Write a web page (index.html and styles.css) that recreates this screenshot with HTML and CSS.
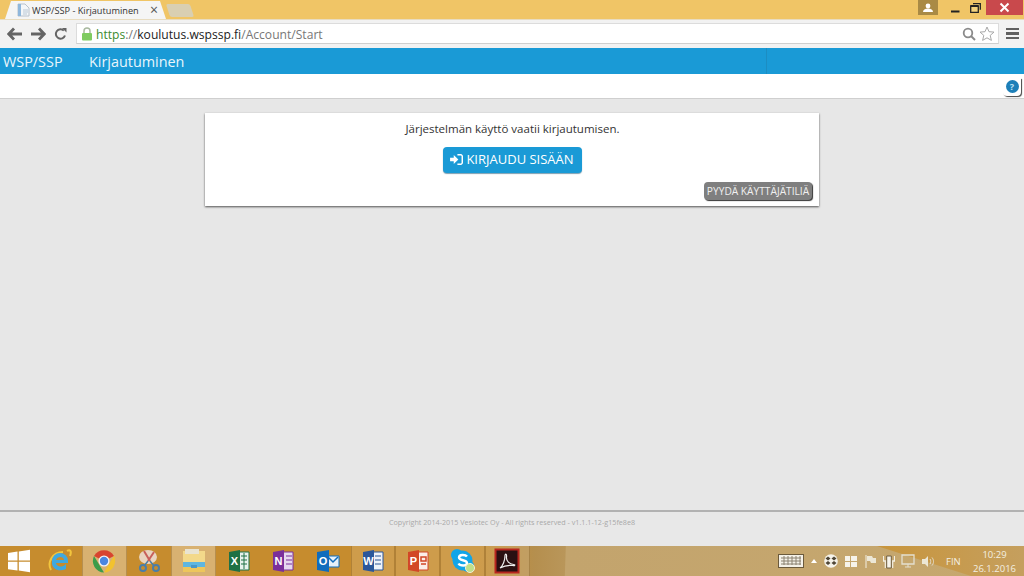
FILE: index.html
```html
<!DOCTYPE html>
<html lang="fi">
<head>
<meta charset="utf-8">
<title>WSP/SSP - Kirjautuminen</title>
<link rel="stylesheet" href="styles.css">
</head>
<body>
<div class="screen">
  <header class="titlebar">
    <div class="tab">
      <svg class="favicon" width="13" height="14" viewBox="0 0 13 14"><path d="M1 1h7l4 4v8H1z" fill="#f4f6f8" stroke="#b9c2cc"/><path d="M1 1h3v12H1z" fill="#8fb7dc"/><path d="M6 7h5M6 9h5M6 11h4" stroke="#b9c8d6"/></svg>
      <span class="tab-title">WSP/SSP - Kirjautuminen</span>
      <span class="tab-close">×</span>
    </div>
    <div class="tab-new"></div>
    <div class="window-controls">
      <div class="user-btn"><svg width="12" height="10" viewBox="0 0 12 10"><circle cx="6" cy="3" r="2.400" fill="#fff"/><path d="M1 9c0-2 2-3.500 5-3.500s5 1.500 5 3.500z" fill="#fff"/></svg></div>
      <div class="win-btn"><svg width="10" height="10" viewBox="0 0 10 10"><path d="M1 8.500h8.500" stroke="#222" stroke-width="2"/></svg></div>
      <div class="win-btn"><svg width="11" height="10" viewBox="0 0 11 10"><path d="M3 .7h7.300v6M.7 3h7.600v6.300H.7z" fill="#f3d27c" stroke="#222" stroke-width="1.300"/><path d="M.7 3h7.600" stroke="#222" stroke-width="2"/></svg></div>
      <div class="close-btn"><svg width="11" height="11" viewBox="0 0 11 11"><path d="M1.500 1.500l8 8M9.500 1.500l-8 8" stroke="#fff" stroke-width="2"/></svg></div>
    </div>
  </header>

  <div class="toolbar">
    <svg class="tool-icon" width="16" height="14" viewBox="0 0 16 14"><path d="M7 1.500L1.800 7 7 12.500M2.500 7h12.500" fill="none" stroke="#646464" stroke-width="2.800"/></svg>
    <svg class="tool-icon" width="16" height="14" viewBox="0 0 16 14"><path d="M9 1.500L14.200 7 9 12.500M13.500 7H1" fill="none" stroke="#646464" stroke-width="2.800"/></svg>
    <svg class="tool-icon reload" width="13" height="14" viewBox="0 0 13 14"><path d="M11 8.500A4.700 4.700 0 1 1 9.800 3.600" fill="none" stroke="#646464" stroke-width="2"/><path d="M8 1h4.500v4.500z" fill="#646464"/></svg>
    <div class="omnibox">
      <svg class="lock" width="12" height="14" viewBox="0 0 12 14"><path d="M3 6V4a3 3 0 0 1 6 0v2" fill="none" stroke="#a9b9a0" stroke-width="1.500"/><rect x="1" y="6" width="10" height="7.500" rx="1" fill="#7fcb60"/></svg>
      <span class="url"><span class="url-scheme">https</span><span class="url-path">://</span><span class="url-host">koulutus.wspssp.fi</span><span class="url-path">/Account/Start</span></span>
      <svg class="search" width="14" height="14" viewBox="0 0 14 14"><circle cx="6" cy="6" r="4.300" fill="none" stroke="#8a8a8a" stroke-width="1.800"/><path d="M9 9l4 4" stroke="#8a8a8a" stroke-width="2"/></svg>
      <svg class="star" width="16" height="15" viewBox="0 0 16 15"><path d="M8 1l2 4.700 5 .4-3.800 3.300 1.200 5L8 11.800 3.600 14.400l1.200-5L1 6.100l5-.4z" fill="#fff" stroke="#a8a8a8"/></svg>
    </div>
    <div class="menu-btn"><span></span><span></span><span></span></div>
  </div>

  <nav class="appbar">
    <span class="brand">WSP/SSP</span>
    <span class="page-name">Kirjautuminen</span>
    <span class="appbar-divider"></span>
  </nav>

  <div class="subbar">
    <div class="help-btn"><span class="help-dot">?</span></div>
  </div>

  <main class="content">
    <section class="card">
      <p class="card-text">Järjestelmän käyttö vaatii kirjautumisen.</p>
      <a class="login-btn">
        <svg width="13" height="11" viewBox="0 0 14 12"><path d="M0 4h4V1l5 5-5 5V8H0z" fill="#fff"/><path d="M8 .8h3.500A2 2 0 0 1 13.300 3v6a2 2 0 0 1-1.800 2.200H8" fill="none" stroke="#fff" stroke-width="1.600"/></svg>
        KIRJAUDU SISÄÄN
      </a>
      <div class="card-foot"><a class="request-btn">PYYDÄ KÄYTTÄJÄTILIÄ</a></div>
    </section>
  </main>

  <footer class="page-footer">Copyright 2014-2015 Vesiotec Oy - All rights reserved - v1.1.1-12-g15fe8e8</footer>

  <div class="taskbar">
    <div class="task-start">
      <svg width="24" height="24" viewBox="0 0 24 24"><path d="M1 4l9.500-1.400V11.500H1zM11.800 2.400L23 .8v10.700H11.800zM1 12.800h9.500v8.800L1 20.200zM11.800 12.800H23v10.400l-11.200-1.600z" fill="#fff"/></svg>
    </div>
    <div class="task-item">
      <svg width="28" height="28" viewBox="0 0 28 28"><path d="M6 23C2 16 7 5 18 5" fill="none" stroke="#f2c53d" stroke-width="2"/><path d="M22 4c3-2 5 0 3 5" fill="none" stroke="#f2c53d" stroke-width="2"/><path d="M7 14a8 8 0 0 1 16 0v2H11c.5 4 6 5 10 1v5c-6 3-15 1-14-8zm4-1h8c0-4-7-4-8 0z" fill="#3fa9e0"/></svg>
    </div>
    <div class="task-item is-open is-bright">
      <svg width="26" height="26" viewBox="0 0 26 26"><path d="M13 13L3 8a11.500 11.500 0 0 1 20 0z" fill="#d8432f"/><path d="M13 24.500A11.500 11.500 0 0 1 3 8l6 10z" fill="#3c9c4a"/><path d="M23 8a11.500 11.500 0 0 1-10 16.500L18 16z" fill="#f2c22e"/><circle cx="13" cy="13" r="5.500" fill="#f4f4f4"/><circle cx="13" cy="13" r="4.200" fill="#4a86e0"/></svg>
    </div>
    <div class="task-item">
      <svg width="26" height="26" viewBox="0 0 26 26"><ellipse cx="12" cy="9" rx="9" ry="7" fill="#e9d5c0"/><path d="M8 3l6 10" stroke="#c8605a" stroke-width="2"/><path d="M18 4l-6 9" stroke="#c8605a" stroke-width="2"/><path d="M14 13l4 5M12 13l-4 5" stroke="#4a7ea8" stroke-width="1.500"/><circle cx="7" cy="20" r="3" fill="none" stroke="#4a7ea8" stroke-width="2"/><circle cx="20" cy="20" r="3" fill="none" stroke="#4a7ea8" stroke-width="2"/></svg>
    </div>
    <div class="task-item is-open is-bright">
      <svg width="26" height="26" viewBox="0 0 26 26"><path d="M2 3h22v21H2z" fill="#f3d98a"/><path d="M4 1h14v5H4z" fill="#e9e4d2"/><path d="M2 14h22v5H2z" fill="#5fb6e0"/><path d="M2 19h22v5H2z" fill="#edc65c"/><path d="M10 17h6v3h-6z" fill="#4a97c8"/></svg>
    </div>
    <div class="task-item">
      <svg width="24" height="24" viewBox="0 0 24 24"><path d="M12 3h10v18H12z" fill="#e8f2ec" stroke="#1e7145"/><path d="M14 7h6M14 11h6M14 15h6M17 4v16" stroke="#1e7145"/><path d="M2 3l11-2v22L2 21z" fill="#1e7145"/><text class="office-letter" x="7.500" y="16" text-anchor="middle">X</text></svg>
    </div>
    <div class="task-item">
      <svg width="24" height="24" viewBox="0 0 24 24"><path d="M12 3h10v18H12z" fill="#e6d8ef" stroke="#7b2f9b"/><path d="M15 7h6M15 11h6M15 15h6" stroke="#7b2f9b"/><path d="M2 3l11-2v22L2 21z" fill="#7b2f9b"/><text class="office-letter" x="7.500" y="16" text-anchor="middle">N</text></svg>
    </div>
    <div class="task-item">
      <svg width="24" height="24" viewBox="0 0 24 24"><path d="M11 7h12v11H11z" fill="#e7f1fa" stroke="#0f6cbd"/><path d="M12 8l5 5 5-5" fill="none" stroke="#0f6cbd" stroke-width="1.500"/><path d="M1 3l12-2v22L1 21z" fill="#0f6cbd"/><text class="office-letter" x="7" y="16" text-anchor="middle">O</text></svg>
    </div>
    <div class="task-item is-open">
      <svg width="24" height="24" viewBox="0 0 24 24"><path d="M12 3h10v18H12z" fill="#eef2f9" stroke="#2b579a"/><path d="M14 7h6M14 11h6M14 15h6" stroke="#2b579a"/><path d="M2 3l11-2v22L2 21z" fill="#2b579a"/><text class="office-letter" x="7.500" y="16" text-anchor="middle">W</text></svg>
    </div>
    <div class="task-item is-open">
      <svg width="24" height="24" viewBox="0 0 24 24"><path d="M12 3h10v18H12z" fill="#fbeee8" stroke="#d24726"/><path d="M15 8h5v4h-5zM15 15h5" fill="none" stroke="#d24726" stroke-width="1.500"/><path d="M2 3l11-2v22L2 21z" fill="#d24726"/><text class="office-letter" x="7.500" y="16" text-anchor="middle">P</text></svg>
    </div>
    <div class="task-item is-open">
      <svg width="26" height="26" viewBox="0 0 26 26"><circle cx="7" cy="7" r="6" fill="#12a5e8"/><circle cx="18" cy="18" r="6" fill="#12a5e8"/><circle cx="12.500" cy="12.500" r="10" fill="#12a5e8"/><path d="M17 8.500c-1.500-2-8-2.500-8 1 0 3.500 8 2 8 5.500 0 3.500-7 3-8.500 .5" fill="none" stroke="#fff" stroke-width="2.400"/><circle cx="20" cy="20" r="4.500" fill="#bfe08a" stroke="#f1f1d8"/></svg>
    </div>
    <div class="task-item is-open">
      <svg width="26" height="26" viewBox="0 0 26 26"><path d="M1.500 1.500h23v23h-23z" fill="#2a1012" stroke="#b8261f" stroke-width="2"/><path d="M6 20c3-2 5-8 5-12 0-3 2-2 1.500 1-.5 4 3 7 7 7.500 2 .3 1.500 1.500-1 1-4-.5-8 0-12.500 2.500z" fill="none" stroke="#eee" stroke-width="1.200"/></svg>
    </div>
    <div class="tray">
      <svg class="tray-keyboard" width="26" height="14" viewBox="0 0 26 14"><rect x=".5" y=".5" width="25" height="13" fill="#f4f1e8" stroke="#6b5a3c"/><path d="M3 4h20M3 7h20M3 10h20M6 2v9M10 2v9M14 2v9M18 2v9M22 2v9" stroke="#8a8170"/></svg>
      <svg width="8" height="6" viewBox="0 0 8 6"><path d="M4 1l3 4H1z" fill="#fff"/></svg>
      <svg width="14" height="14" viewBox="0 0 14 14"><circle cx="7" cy="7" r="6.800" fill="#f6f3ea"/><path d="M4 2.500l2.500 2L4 6.500l-2.500-2zM10 2.500l2.500 2-2.500 2-2.500-2zM4 7l2.500 2L4 11 1.500 9zM10 7l2.500 2-2.500 2-2.500-2z" fill="#4f4636"/></svg>
      <svg width="14" height="13" viewBox="0 0 14 13"><path d="M1 1h5v5H1zM7 1h6v5H7zM1 7h5v5H1zM7 7h6v5H7z" fill="#f6f3ea"/></svg>
      <svg width="13" height="13" viewBox="0 0 13 13"><path d="M2 0v13" stroke="#f3efe2"/><path d="M3 1h5l1 2h3v5H7L6 6H3z" fill="#ece7d6"/></svg>
      <svg width="12" height="15" viewBox="1 0 13 15" preserveAspectRatio="none"><path d="M5 2h5v12H5z" fill="#f6f3ea" stroke="#6b5a3c"/><path d="M1.500 2v5h2v7M13.500 2v5h-2v7" fill="none" stroke="#f3efe2" stroke-width="1.300"/></svg>
      <svg width="14" height="14" viewBox="0 0 14 14"><path d="M1 1h12v9H1z" fill="none" stroke="#e4dfcf" stroke-width="1.300"/><path d="M7 10v3M4 13h6" stroke="#e4dfcf"/></svg>
      <svg width="14" height="13" viewBox="0 0 14 13"><path d="M1 4h3l3-3v11L4 9H1z" fill="#ece7d6"/><path d="M9 4c1 1.500 1 3.500 0 5M11 2.500c2 2.500 2 5.500 0 8" fill="none" stroke="#e4dfcf"/></svg>
      <span class="tray-lang">FIN</span>
      <div class="clock"><span>10:29</span><span>26.1.2016</span></div>
    </div>
  </div>
</div>
</body>
</html>
```
FILE: styles.css
```css
* { box-sizing: border-box; }
html, body { margin: 0; padding: 0; }
body { font-family: "Open Sans", sans-serif; background: #e7e7e7; }
a { text-decoration: none; cursor: pointer; }
p { margin: 0; }

.screen { width: 1024px; height: 576px; display: flex; flex-direction: column; overflow: hidden; }

.titlebar { height: 19px; flex: none; background: #f0c566; display: flex; align-items: flex-end; padding-left: 5px; }
.tab { width: 161px; height: 18px; background: #f5f5f5; display: flex; align-items: center; padding-left: 12px; clip-path: polygon(0 100%, 6px 0, 155px 0, 100% 100%); }
.favicon { margin-right: 2px; flex: none; }
.tab-title { font-size: 9.200px; color: #333; width: 118px; flex: none; white-space: nowrap; }
.tab-close { font-size: 14px; line-height: 14px; color: #555; }
.tab-new { width: 24px; height: 13px; margin-left: 2px; margin-bottom: 2px; background: #d9cfb2; border-radius: 2px; transform: skewX(18deg); }
.window-controls { margin-left: auto; align-self: flex-start; display: flex; height: 15px; margin-right: 1px; }
.user-btn { width: 20px; height: 15px; background: #a98a45; display: flex; align-items: center; justify-content: center; margin-right: 6px; }
.win-btn { width: 21px; height: 15px; display: flex; align-items: center; justify-content: center; }
.close-btn { width: 37px; height: 15px; background: #c9494c; display: flex; align-items: center; justify-content: center; }

.toolbar { height: 29px; flex: none; background: #f2f2f2; border-top: 1px solid #e8dcc0; display: flex; align-items: center; padding: 0 5px 1px 7px; }
.tool-icon { margin-right: 7px; flex: none; }
.reload { margin: 0 9px 0 1px; }
.omnibox { width: 927px; height: 21px; background: #fff; border: 1px solid #dcdcdc; border-bottom-color: #cfcfcf; display: flex; align-items: center; padding: 0 3px 0 4px; }
.lock { flex: none; margin-right: 3px; }
.url { font-size: 12.100px; white-space: nowrap; padding-top: 1px; }
.url-scheme { color: #3c8a2e; }
.url-path { color: #777; }
.url-host { color: #222; }
.search { margin-left: auto; margin-right: 3px; }
.menu-btn { margin-left: 7px; width: 13px; display: flex; flex-direction: column; gap: 2px; }
.menu-btn span { height: 2.500px; background: #606060; display: block; }

.appbar { height: 26px; flex: none; background: #1a9ad6; color: #e9f6fc; display: flex; align-items: center; font-size: 14.400px; position: relative; }
.brand { width: 89px; padding-left: 3px; }
.appbar-divider { position: absolute; left: 766px; top: 0; bottom: 0; width: 1px; background: #1c8dc2; }

.subbar { height: 25px; flex: none; background: #fff; border-bottom: 1px solid #cfcfcf; display: flex; justify-content: flex-end; align-items: flex-start; padding-right: 3px; padding-top: 4px; }
.help-btn { width: 18px; height: 18px; background: #fff; border-radius: 0 0 4px 4px; box-shadow: 1px 1px 1px #444; display: flex; align-items: flex-start; justify-content: center; padding-top: 2px; }
.help-dot { width: 13px; height: 13px; border-radius: 50%; background: #1d7fb8; color: #bfe4f6; font-size: 9px; font-weight: 700; line-height: 13px; text-align: center; }

.content { flex: 1; min-height: 0; padding: 14px 205px 0; }
.card { height: 93px; background: #fff; box-shadow: 0 1px 2px rgba(0,0,0,.65); display: flex; flex-direction: column; align-items: center; padding-top: 8px; }
.card-text { font-size: 11.500px; line-height: 16px; color: #333; margin-left: 1px; }
.login-btn { margin-top: 10px; width: 139px; height: 26px; padding-bottom: 2px; border-radius: 4px; background: #1a9ad6; color: #fff; font-size: 13px; display: flex; align-items: center; justify-content: center; gap: 3px; box-shadow: 0 1px 1px #7d9fb2; }
.card-foot { align-self: stretch; display: flex; justify-content: flex-end; padding-right: 7px; margin-top: 9px; }
.request-btn { width: 108px; height: 18px; border-radius: 4px; background: #7f7f7f; color: #f0f0f0; font-size: 10.200px; line-height: 18px; text-align: center; box-shadow: 1px 1px 1px #333; white-space: nowrap; }

.page-footer { height: 36px; flex: none; border-top: 2px solid #b2b2b2; background: #e8e8e8; color: #a8a8a8; font-size: 7.200px; text-align: center; padding-top: 5px; }

.taskbar { height: 30px; flex: none; display: flex; align-items: stretch; background: linear-gradient(92deg, #c68c2e 0, #c68c2e 480px, #b58f4e 535px, #b9965a 565px, #c3a46d 566px, #c6a86f 100%); position: relative; }
.taskbar::before { content: ""; position: absolute; left: 877px; right: 0; top: 0; bottom: 0; background: linear-gradient(90deg, #c8953c, #c59f5e); clip-path: polygon(0 0, 100% 0, 100% 100%, 64% 100%); }
.task-start, .task-item, .tray { position: relative; }
.task-start { width: 37px; display: flex; align-items: center; justify-content: center; }
.task-item { width: 44.800px; flex: none; display: flex; align-items: center; justify-content: center; }
.task-item.is-open { background: rgba(255,255,255,.14); box-shadow: inset 1px 0 rgba(120,80,20,.35), inset -1px 0 rgba(120,80,20,.35); }
.task-item.is-bright { background: rgba(255,255,255,.32); }
.office-letter { font-family: "Liberation Sans", sans-serif; font-size: 11px; font-weight: 700; fill: #fff; }
.tray { margin-left: auto; display: flex; align-items: center; gap: 6px; padding-right: 8px; }
.tray-lang { font-size: 9.500px; color: #f3efe2; margin-left: 5px; width: 21px; }
.clock { display: flex; flex-direction: column; align-items: center; font-size: 9.500px; line-height: 14px; color: #f3efe2; padding-top: 2px; }
```
